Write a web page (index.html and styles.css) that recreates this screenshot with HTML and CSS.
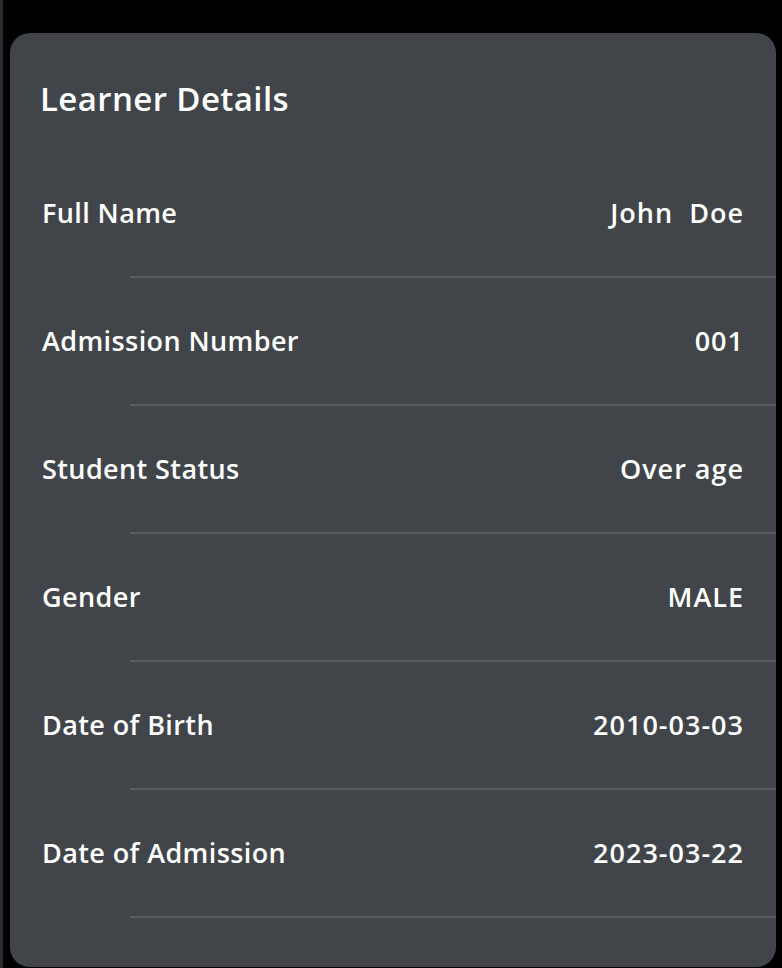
FILE: index.html
```html
<!DOCTYPE html>
<html>
<head>
<meta charset="utf-8">
<link rel="stylesheet" href="styles.css">
</head>
<body>
<div class="edge"></div>
<section class="card">
  <h1 class="title">Learner Details</h1>
  <div class="row"><span class="label">Full Name</span><span class="value">John&nbsp;&nbsp;Doe</span></div>
  <div class="row"><span class="label">Admission Number</span><span class="value">001</span></div>
  <div class="row"><span class="label">Student Status</span><span class="value">Over age</span></div>
  <div class="row"><span class="label">Gender</span><span class="value">MALE</span></div>
  <div class="row"><span class="label">Date of Birth</span><span class="value">2010-03-03</span></div>
  <div class="row"><span class="label">Date of Admission</span><span class="value">2023-03-22</span></div>
</section>
</body>
</html>
```
FILE: styles.css
```css
html, body {
  margin: 0;
  padding: 0;
  background: #000;
  height: 968px;
  overflow: hidden;
}
body {
  position: relative;
  font-family: "Open Sans", "Liberation Sans", sans-serif;
  color: #fff;
  padding-top: 33px;
  box-sizing: border-box;
}
.edge {
  position: absolute;
  left: 0;
  top: 0;
  width: 3px;
  height: 968px;
  background: #2a2c2e;
}
.card {
  margin: 0 6px 0 10px;
  height: 934px;
  box-sizing: border-box;
  background: #414549;
  border-radius: 20px;
  padding-top: 46px;
}
.title {
  margin: 0 0 30px 30px;
  font-size: 33px;
  line-height: 40px;
  font-weight: 600;
  letter-spacing: 0.4px;
}
.row {
  height: 128px;
  box-sizing: border-box;
  display: flex;
  align-items: center;
  justify-content: space-between;
  padding: 0 32px 0 32px;
  position: relative;
}
.row::after {
  content: "";
  position: absolute;
  left: 120px;
  right: 0;
  bottom: -1px;
  height: 2px;
  background: #595d61;
}
.label, .value {
  font-size: 27px;
  font-weight: 600;
  line-height: 32px;
  white-space: nowrap;
}
.label {
  letter-spacing: 0.4px;
}
.value {
  letter-spacing: 1px;
}
```
